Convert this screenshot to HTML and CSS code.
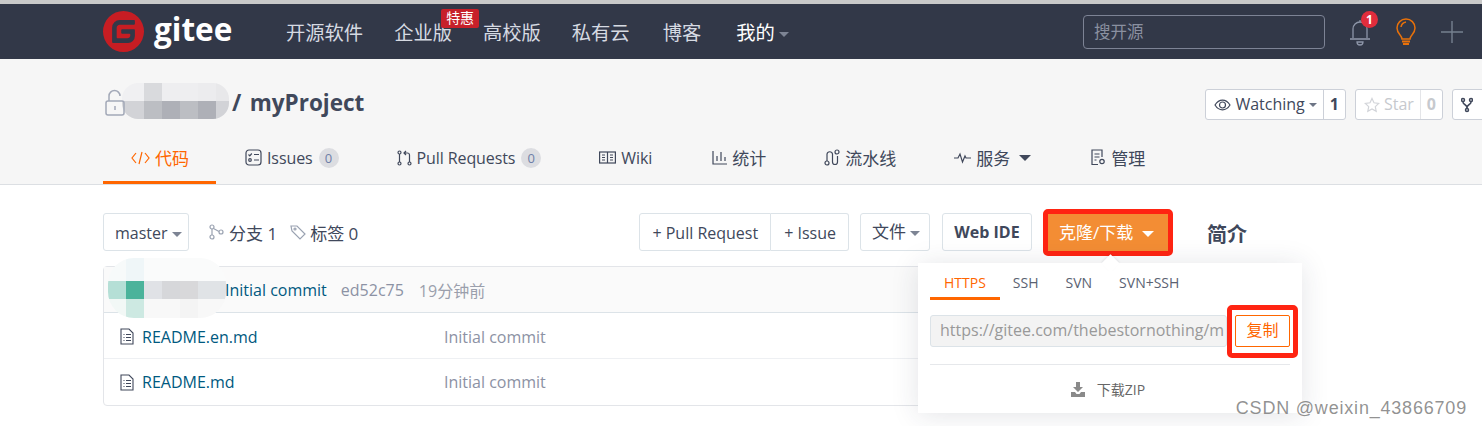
FILE: index.html
```html
<!DOCTYPE html>
<html lang="zh-CN">
<head>
    <meta charset="UTF-8">
    <title>myProject - Gitee</title>
    <link rel="stylesheet" href="styles.css">
</head>
<body>
    <header class="topbar">
        <a class="logo" href="#">
            <svg class="logo-mark" viewBox="0 0 24 24"><path fill="#c71d23" d="M11.984 0A12 12 0 0 0 0 12a12 12 0 0 0 12 12 12 12 0 0 0 12-12A12 12 0 0 0 12 0a12 12 0 0 0-.016 0zm6.09 5.333c.328 0 .593.266.592.593v1.482a.594.594 0 0 1-.593.592H9.777c-.982 0-1.778.796-1.778 1.778v5.63c0 .327.266.592.593.592h5.63c.982 0 1.778-.796 1.778-1.778v-.296a.593.593 0 0 0-.592-.593h-4.15a.592.592 0 0 1-.592-.592v-1.482a.593.593 0 0 1 .593-.592h6.815c.327 0 .593.265.593.592v3.408a4 4 0 0 1-4 4H5.926a.593.593 0 0 1-.593-.593V9.778a4.444 4.444 0 0 1 4.445-4.444h8.296Z"/></svg>
            <span class="logo-text">gitee</span>
        </a>
        <nav class="topnav">
            <a href="#">开源软件</a>
            <a href="#" class="has-badge">企业版<span class="hot-badge">特惠</span></a>
            <a href="#">高校版</a>
            <a href="#">私有云</a>
            <a href="#" class="nav-blog">博客</a>
            <a href="#" class="nav-mine">我的<i class="caret"></i></a>
        </nav>
        <div class="search">搜开源</div>
        <a class="top-icon bell" href="#">
            <svg width="22" height="28" viewBox="0 0 22 28" fill="none" stroke="#8d95a8" stroke-width="1.3"><path d="M4 20V11a7 7 0 0 1 14 0v9"/><path d="M1 21h20" stroke-width="1.6"/><path d="M8 24a3 3 0 0 0 6 0z"/><path d="M11 2v2"/></svg>
            <span class="bell-count">1</span>
        </a>
        <a class="top-icon" href="#">
            <svg width="22" height="28" viewBox="0 0 22 28" fill="none" stroke="#e8710a" stroke-width="1.5"><path d="M7 21c0-4-5-5-5-11a9 9 0 0 1 18 0c0 6-5 7-5 11z"/><path d="M11 4a6 6 0 0 0-5 5"/><path d="M7 23.500h8M8 26h6" stroke-width="2"/></svg>
        </a>
        <a class="top-icon" href="#">
            <svg width="22" height="22" viewBox="0 0 22 22" stroke="#76808f" stroke-width="1.4"><path d="M11 0v22M0 11h22"/></svg>
        </a>
    </header>

    <section class="repo-head">
        <div class="repo-row">
            <h1 class="repo-title">
                <svg class="lock" width="20" height="27" viewBox="0 0 20 27" fill="none" stroke="#a3a9b8" stroke-width="1.5"><path d="M4 12V7a5.500 5.500 0 0 1 11 0"/><rect x="1" y="12" width="18" height="14" rx="2"/><path d="M10 17v4"/></svg>
                <svg class="mosaic" width="110" height="36" viewBox="0 0 110 36">
                    <defs><clipPath id="owner-clip"><rect width="107" height="36" rx="16"/></clipPath></defs>
                    <g clip-path="url(#owner-clip)">
                        <rect width="22" height="18" fill="#f0f0f2"/><rect x="22" width="18" height="18" fill="#d9dadd"/><rect x="40" width="18" height="18" fill="#eeeef0"/><rect x="58" width="18" height="18" fill="#eeeef0"/><rect x="76" width="18" height="18" fill="#ececee"/><rect x="94" width="16" height="18" fill="#e8e8ea"/>
                        <rect y="18" width="22" height="18" fill="#d2d3d7"/><rect x="22" y="18" width="18" height="18" fill="#bcbec3"/><rect x="40" y="18" width="18" height="18" fill="#aeb0b7"/><rect x="58" y="18" width="18" height="18" fill="#bcbec3"/><rect x="76" y="18" width="18" height="18" fill="#aeb0b7"/><rect x="94" y="18" width="16" height="18" fill="#d2d3d7"/>
                    </g>
                </svg>
                <span class="repo-name">/ myProject</span>
            </h1>
            <div class="repo-actions">
                <div class="count-btn">
                    <span class="count-label">
                        <svg width="17" height="12" viewBox="0 0 17 12" fill="none" stroke="#40485b" stroke-width="1.2"><path d="M1 6c4-6.500 11-6.500 15 0-4 6.500-11 6.500-15 0z"/><circle cx="8.500" cy="6" r="3"/></svg>
                        Watching<i class="caret small"></i>
                    </span>
                    <span class="count-num">1</span>
                </div>
                <div class="count-btn muted">
                    <span class="count-label">
                        <svg width="16" height="16" viewBox="0 0 16 16" fill="none" stroke="#d2d4d9" stroke-width="1.2"><path d="M8 1.500l2 4.300 4.700.6-3.400 3.200.9 4.700L8 11.900l-4.200 2.400.9-4.700L1.300 6.400 6 5.800z"/></svg>
                        Star
                    </span>
                    <span class="count-num">0</span>
                </div>
                <div class="count-btn fork">
                    <span class="count-label">
                        <svg width="12" height="16" viewBox="0 0 12 16" fill="none" stroke="#40485b" stroke-width="1.5"><circle cx="2" cy="3" r="1.500"/><circle cx="10" cy="3" r="1.500"/><circle cx="6" cy="13" r="1.500"/><path d="M2 5c0 3 4 2 4 6M10 5c0 3-4 2-4 6"/></svg>
                    </span>
                </div>
            </div>
        </div>
        <nav class="tabs">
            <a href="#" class="tab cn active">
                <svg width="19" height="14" viewBox="0 0 19 14" fill="none" stroke="#f60" stroke-width="1.2"><path d="M5 2L1 7l4 5M14 2l4 5-4 5M11 1L8 13"/></svg>
                代码
            </a>
            <a href="#" class="tab">
                <svg width="17" height="17" viewBox="0 0 17 17" fill="none" stroke="#40485b" stroke-width="1.2"><rect x="1" y="1" width="15" height="15" rx="3"/><path d="M3.500 5.500l1.300 1.300 2-2.300M9 5.500h5M9 11h5"/><circle cx="5" cy="11" r="1.300"/></svg>
                Issues <span class="pill">0</span>
            </a>
            <a href="#" class="tab push-2">
                <svg width="15" height="16" viewBox="0 0 15 16" fill="none" stroke="#40485b" stroke-width="1.2"><circle cx="2.500" cy="2.500" r="1.500"/><circle cx="2.500" cy="13.500" r="1.500"/><circle cx="12.500" cy="13.500" r="1.500"/><path d="M2.500 4v8M12.500 12V5a2 2 0 0 0-2-2H7M9 1L7 3l2 2"/></svg>
                Pull Requests <span class="pill">0</span>
            </a>
            <a href="#" class="tab push-2">
                <svg width="17" height="13" viewBox="0 0 17 13" fill="none" stroke="#40485b" stroke-width="1.2"><rect x=".6" y="1" width="15.800" height="11"/><path d="M8.500 1v11M3 4h3M3 6.500h3M3 9h3M11 4h3M11 6.500h3M11 9h3"/></svg>
                Wiki
            </a>
            <a href="#" class="tab cn push-4">
                <svg width="15" height="15" viewBox="0 0 15 15" fill="none" stroke="#40485b" stroke-width="1.2"><path d="M1 1v13h14M5 11V6M9 11V2M13 11V7"/></svg>
                统计
            </a>
            <a href="#" class="tab cn push-2">
                <svg width="16" height="17" viewBox="0 0 16 17" fill="none" stroke="#40485b" stroke-width="1.2"><circle cx="3" cy="14" r="2"/><circle cx="13" cy="3" r="2"/><path d="M3 12V5a2.800 2.800 0 0 1 5.500 0v8a2.500 2.500 0 0 0 5 0V7"/></svg>
                流水线
            </a>
            <a href="#" class="tab cn push-2">
                <svg width="17" height="12" viewBox="0 0 17 12" fill="none" stroke="#40485b" stroke-width="1.200"><path d="M0 6h4l2-4 2.500 8L11 4l1 2h5"/></svg>
                服务 <i class="caret big"></i>
            </a>
            <a href="#" class="tab cn push-3">
                <svg width="16" height="17" viewBox="0 0 16 17" fill="none" stroke="#40485b" stroke-width="1.2"><path d="M8 15.500H2V1h10v7"/><path d="M4.500 5h5M4.500 8h5M4.500 11h2"/><circle cx="12" cy="12.500" r="2.200"/></svg>
                管理
            </a>
        </nav>
    </section>

    <main class="page">
        <div class="content">
            <div class="toolbar">
                <a class="btn branch-btn" href="#">master<i class="caret"></i></a>
                <span class="meta">
                    <svg width="15" height="16" viewBox="0 0 15 16" fill="none" stroke="#9aa2b1" stroke-width="1.200"><circle cx="3" cy="3" r="2"/><circle cx="3" cy="13" r="2"/><circle cx="12" cy="8" r="2"/><path d="M3 5v6M4.500 4.500L10 7.500"/></svg>
                    分支 1
                </span>
                <span class="meta">
                    <svg width="16" height="16" viewBox="0 0 16 16" fill="none" stroke="#9aa2b1" stroke-width="1.200"><path d="M1 2h6l8 8-5 5-8-8z"/><circle cx="5" cy="5" r="1"/></svg>
                    标签 0
                </span>
                <div class="btn-group">
                    <a class="btn" href="#">+ Pull Request</a>
                    <a class="btn" href="#">+ Issue</a>
                </div>
                <a class="btn file-btn" href="#">文件<i class="caret"></i></a>
                <a class="btn ide-btn" href="#">Web IDE</a>
                <a class="clone-btn" href="#">克隆/下载<i class="caret white"></i></a>
            </div>
            <div class="file-table">
                <div class="commit-row">
                    <svg class="mosaic-avatar" width="118" height="60" viewBox="0 0 118 60">
                        <defs><clipPath id="avatar-clip"><rect width="118" height="60" rx="26"/></clipPath></defs>
                        <g clip-path="url(#avatar-clip)">
                            <rect width="18" height="23" fill="#f7fafa"/><rect x="18" width="18" height="23" fill="#eff6f8"/><rect x="36" width="82" height="23" fill="#fafbfb"/>
                            <rect y="23" width="18" height="18" fill="#b5dfd6"/><rect x="18" y="23" width="18" height="18" fill="#4bb39b"/><rect x="36" y="23" width="18" height="18" fill="#e0e2e6"/><rect x="54" y="23" width="18" height="18" fill="#d6d7da"/><rect x="72" y="23" width="18" height="18" fill="#d8d8da"/><rect x="90" y="23" width="28" height="18" fill="#e0e3e6"/>
                            <rect y="41" width="18" height="19" fill="#f2f8f6"/><rect x="18" y="41" width="18" height="19" fill="#cde9e2"/><rect x="36" y="41" width="36" height="19" fill="#f8f8f8"/><rect x="72" y="41" width="18" height="19" fill="#f4f4f4"/><rect x="90" y="41" width="28" height="19" fill="#f8f8f8"/>
                        </g>
                    </svg>
                    <a href="#" class="commit-msg">Initial commit</a>
                    <span class="commit-hash">ed52c75</span>
                    <span class="commit-time">19分钟前</span>
                </div>
                <div class="file-row">
                    <a href="#" class="file-name">
                        <svg width="14" height="17" viewBox="0 0 14 17" fill="none" stroke="#40485b" stroke-width="1.100"><path d="M1 1h8l4 4v11H1z"/><path d="M3.500 6.500h1M6 6.500h5M3.500 9.500h1M6 9.500h5M3.500 12.500h1M6 12.500h5"/></svg>
                        README.en.md
                    </a>
                    <span class="file-commit">Initial commit</span>
                </div>
                <div class="file-row">
                    <a href="#" class="file-name">
                        <svg width="14" height="17" viewBox="0 0 14 17" fill="none" stroke="#40485b" stroke-width="1.100"><path d="M1 1h8l4 4v11H1z"/><path d="M3.500 6.500h1M6 6.500h5M3.500 9.500h1M6 9.500h5M3.500 12.500h1M6 12.500h5"/></svg>
                        README.md
                    </a>
                    <span class="file-commit">Initial commit</span>
                </div>
            </div>
        </div>
        <aside class="sidebar"><h3>简介</h3></aside>

        <div class="clone-pop">
            <div class="pop-tabs">
                <a href="#" class="pop-tab active">HTTPS</a>
                <a href="#" class="pop-tab">SSH</a>
                <a href="#" class="pop-tab">SVN</a>
                <a href="#" class="pop-tab">SVN+SSH</a>
            </div>
            <div class="url-row">
                <div class="url-input"><span>https://gitee.com/thebestornothing/m</span></div>
                <a href="#" class="copy-btn">复制</a>
            </div>
            <a href="#" class="zip-link">
                <svg width="14" height="15" viewBox="0 0 14 15" fill="#8a8a8a"><path d="M5 0h4v5h3L7 10 2 5h3z"/><path d="M0 10h4l1.500 2h3L10 10h4v5H0z"/></svg>
                下载ZIP
            </a>
        </div>
    </main>
    <div class="watermark">CSDN @weixin_43866709</div>
</body>
</html>
```

FILE: styles.css
```css
* {
    box-sizing: border-box;
}

body {
    margin: 0;
    height: 426px;
    overflow: hidden;
    position: relative;
    background: #fff;
    color: #40485b;
    font-family: "Open Sans", "Noto Sans CJK SC", sans-serif;
    font-size: 16px;
}

a {
    color: inherit;
    text-decoration: none;
}

/* caret */
.caret {
    display: inline-block;
    margin-left: 4px;
    vertical-align: middle;
    border-left: 5px solid transparent;
    border-right: 5px solid transparent;
    border-top: 5px solid #7d8494;
}

.caret.small {
    margin-left: 0;
    border-left-width: 4px;
    border-right-width: 4px;
    border-top: 4px solid #6d7585;
}

.caret.white {
    margin-left: 9px;
    border-left-width: 6px;
    border-right-width: 6px;
    border-top: 6px solid #fff;
}

.caret.big {
    border-left-width: 6px;
    border-right-width: 6px;
    border-top: 6px solid #40485b;
}

/* top bar */
.topbar {
    display: flex;
    align-items: center;
    height: 59px;
    padding-left: 103px;
    background: #323848;
    border-top: 4px solid #c9c9c9;
}

.logo {
    display: flex;
    align-items: center;
    width: 183px;
}

.logo-mark {
    width: 41px;
    height: 41px;
}

.logo-text {
    margin-left: 10px;
    color: #fff;
    font-family: "Open Sans", sans-serif;
    font-size: 31.500px;
    font-weight: 700;
    line-height: 41px;
    position: relative;
    top: -3px;
}

.topnav {
    display: flex;
    gap: 31px;
    width: 797px;
    color: #d6dae2;
    font-size: 19.3px;
}

.has-badge {
    position: relative;
}

.hot-badge {
    position: absolute;
    left: 47px;
    top: -9px;
    padding: 0 5px;
    height: 19px;
    line-height: 18px;
    border-radius: 2px;
    background: #c7202a;
    color: #fff;
    font-size: 14px;
    white-space: nowrap;
}

.nav-blog {
    margin-left: 2px;
}

.nav-mine {
    margin-left: 4px;
    color: #fff;
}

.search {
    width: 242px;
    height: 34px;
    padding-left: 10px;
    line-height: 32px;
    border: 1px solid #7d8395;
    border-radius: 4px;
    color: #8a90a0;
    font-size: 16.500px;
}

.top-icon {
    display: block;
    position: relative;
    margin-left: 24px;
    line-height: 0;
}

.top-icon svg {
    display: block;
}

.bell-count {
    position: absolute;
    left: 12px;
    top: -7px;
    width: 17px;
    height: 17px;
    line-height: 17px;
    border-radius: 50%;
    background: #e02d3c;
    color: #fff;
    font-size: 12px;
    font-weight: 700;
    text-align: center;
}

/* repo head */
.repo-head {
    height: 126px;
    padding-left: 103px;
    background: #f6f6f6;
    border-bottom: 1px solid #dcdfe3;
}

.repo-row {
    display: flex;
    justify-content: space-between;
    align-items: flex-start;
    width: 1409px;
    padding-top: 30px;
    height: 73px;
}

.repo-title {
    display: flex;
    align-items: center;
    margin: -3px 0 0;
    height: 30px;
    font-size: 22.500px;
    font-weight: 700;
    word-spacing: 2.500px;
}

.repo-name {
    position: relative;
    top: 1px;
}

.lock {
    margin-left: 2px;
    position: relative;
    top: 1px;
}

.mosaic {
    margin-left: -3px;
}

.repo-actions {
    display: flex;
    gap: 9px;
}

.count-btn {
    display: flex;
    height: 31px;
    background: #fff;
    border: 1px solid #ccd0d8;
    border-radius: 3px;
    line-height: 29px;
}

.count-label {
    display: flex;
    align-items: center;
    gap: 4px;
    padding: 0 6px 0 8px;
}

.count-num {
    padding: 0 6px;
    border-left: 1px solid #ccd0d8;
    font-weight: 700;
}

.muted {
    color: #c6c9ce;
}

.muted .count-num {
    border-left-color: #e4e5e8;
}

.fork {
    width: 60px;
}

.tabs {
    display: flex;
    height: 52px;
}

.tab {
    display: flex;
    align-items: center;
    gap: 5px;
    height: 52px;
    padding: 2px 28px 0;
    border-bottom: 3px solid transparent;
    letter-spacing: -0.1px;
    white-space: nowrap;
}

.tab.cn {
    font-size: 17px;
    letter-spacing: 0;
}

.push-2 {
    margin-left: 2px;
}

.push-3 {
    margin-left: 3px;
}

.push-4 {
    margin-left: 4px;
}

.tab .caret {
    margin-left: 4px;
}

.tab.active {
    margin-right: 1px;
    padding-right: 27px;
    color: #f60;
    border-bottom-color: #f60;
}

.pill {
    width: 20px;
    height: 20px;
    margin-left: 1px;
    line-height: 20px;
    border-radius: 50%;
    background: #dcdde1;
    color: #6f7fa8;
    font-size: 13px;
    letter-spacing: 0;
    text-align: center;
}

/* main */
.page {
    display: flex;
    padding-left: 103px;
}

.content {
    width: 1070px;
}

.toolbar {
    display: flex;
    align-items: center;
    height: 38px;
    margin-top: 28px;
}

.btn {
    display: block;
    height: 38px;
    padding: 0 11px;
    line-height: 38px;
    background: #fff;
    border: 1px solid #dce3e8;
    border-radius: 3px;
    white-space: nowrap;
}

.branch-btn {
    width: 86px;
}

.meta {
    display: flex;
    align-items: center;
    gap: 5px;
    margin-left: 20px;
    font-size: 17px;
    white-space: nowrap;
}

.meta + .meta {
    gap: 4px;
    margin-left: 13px;
}

.btn-group {
    display: flex;
    margin-left: auto;
}

.btn-group .btn {
    padding: 0 12px;
}

.btn-group .btn:first-child {
    border-radius: 3px 0 0 3px;
}

.btn-group .btn + .btn {
    padding-left: 13px;
    border-left: 0;
    border-radius: 0 3px 3px 0;
}

.file-btn {
    width: 70px;
    margin-left: 11px;
    font-size: 17px;
    line-height: 36px;
}

.ide-btn {
    width: 90px;
    margin-left: 12px;
    font-weight: 700;
    text-align: center;
    padding: 0;
    line-height: 37px;
}

.clone-btn {
    display: block;
    flex: 0 0 130px;
    height: 47px;
    margin-left: 11px;
    padding-left: 11px;
    line-height: 37px;
    font-size: 17px;
    background: #f38d34;
    border: 5px solid #ff2412;
    border-radius: 5px;
    color: #fff;
    white-space: nowrap;
}

.file-table {
    margin-top: 15px;
    border: 1px solid #e3e5e9;
    border-radius: 4px;
}

.commit-row {
    display: flex;
    align-items: center;
    position: relative;
    height: 46px;
    padding-left: 121px;
    background: #fafafa;
    border-bottom: 1px solid #dce3e8;
}

.mosaic-avatar {
    position: absolute;
    left: 4px;
    top: -9px;
}

.commit-msg {
    color: #005980;
}

.commit-hash {
    margin-left: 14px;
    color: #8c92a4;
}

.commit-time {
    margin-left: 15px;
    color: #9a9fac;
}

.file-row {
    display: flex;
    align-items: center;
    height: 46px;
    padding: 2px 0 0 16px;
    border-bottom: 1px solid #eef0f3;
}

.file-row + .file-row {
    padding-top: 0;
    border-bottom: 0;
}

.file-name {
    display: flex;
    align-items: center;
    gap: 8px;
    width: 324px;
    color: #005980;
}

.file-commit {
    color: #8c92a4;
}

.sidebar h3 {
    margin: 34px 0 0 34px;
    font-size: 20px;
    font-weight: 700;
}

/* clone popup */
.clone-pop {
    position: absolute;
    left: 918px;
    top: 263px;
    width: 384px;
    height: 150px;
    padding: 0 12px;
    background: #fff;
    box-shadow: 0 2px 26px rgba(40, 50, 70, 0.13);
}

.clone-pop::before {
    content: "";
    position: absolute;
    left: 186px;
    top: -6px;
    width: 13px;
    height: 13px;
    background: #fff;
    transform: rotate(45deg);
    box-shadow: -1px -1px 2px rgba(40, 50, 70, 0.08);
}

.pop-tabs {
    display: flex;
    position: relative;
    height: 37px;
    font-size: 14px;
}

.pop-tab {
    padding: 0 14px;
    line-height: 40px;
    white-space: nowrap;
    color: #5a6272;
}

.pop-tab + .pop-tab {
    margin-left: 13px;
    padding: 0;
    margin-right: 14px;
}

.pop-tab.active {
    color: #f60;
    border-bottom: 3px solid #f60;
}

.url-row {
    display: flex;
    align-items: center;
    height: 65px;
    padding-top: 5px;
    border-bottom: 1px solid #e6e8eb;
}

.url-input {
    flex: 0 0 297px;
    height: 32px;
    margin-top: -8px;
    padding-left: 9px;
    overflow: hidden;
    line-height: 29px;
    white-space: nowrap;
    background: #f3f3f3;
    border: 1px solid #dce3e8;
    border-radius: 3px;
    color: #999;
}

/* the red frame round the button is a mark in the screenshot */
.copy-btn {
    display: flex;
    flex: 0 0 71px;
    align-items: center;
    justify-content: center;
    height: 53px;
    margin-top: -6px;
    padding-bottom: 5px;
    border: 5px solid #ff2412;
    border-radius: 5px;
    background: #fff;
    position: relative;
    color: #f60;
}

.copy-btn::after {
    content: "";
    position: absolute;
    left: 3px;
    top: 5px;
    right: 3px;
    bottom: 6px;
    border: 1px solid #f60;
    border-radius: 2px;
}

.zip-link {
    display: flex;
    justify-content: center;
    align-items: center;
    gap: 12px;
    height: 50px;
    padding: 0 4px 2px 0;
    color: #666;
    font-size: 14px;
}

.watermark {
    position: absolute;
    right: 15px;
    top: 398px;
    color: rgba(110, 110, 110, 0.75);
    font-family: "Liberation Sans", sans-serif;
    font-size: 18px;
    letter-spacing: 0.8px;
    white-space: nowrap;
}
```
